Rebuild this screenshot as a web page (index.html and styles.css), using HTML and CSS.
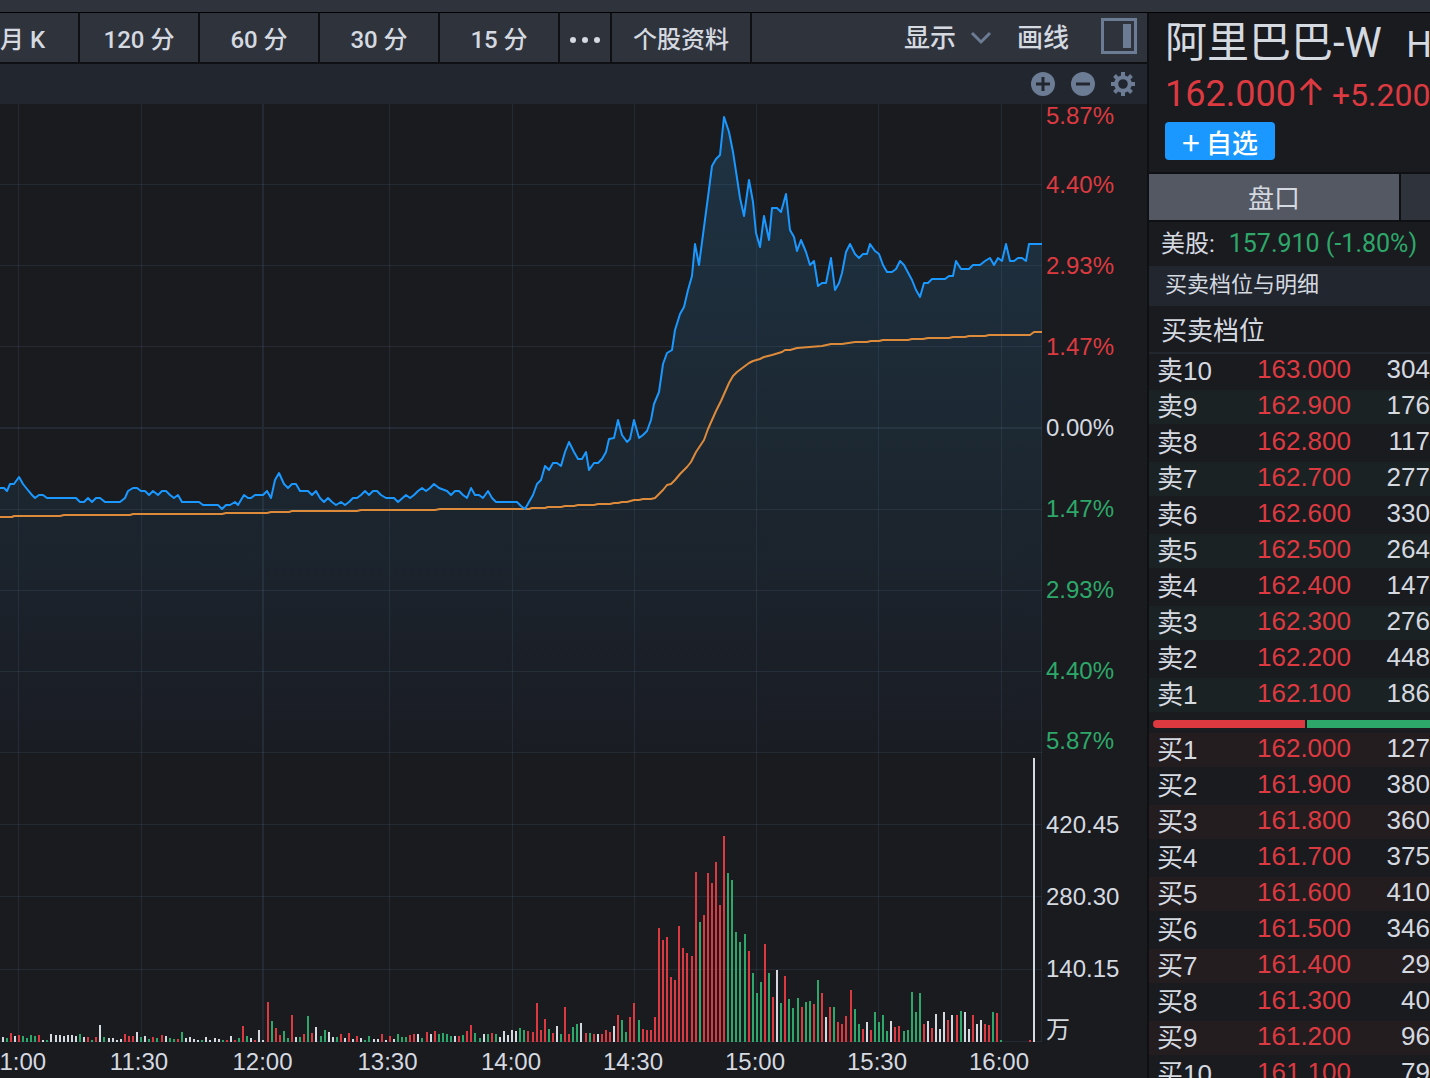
FILE: index.html
```html
<!DOCTYPE html>
<html lang="zh-CN">
<head>
<meta charset="utf-8">
<meta name="viewport" content="width=device-width, initial-scale=1">
<title>阿里巴巴-W</title>
<link rel="stylesheet" href="styles.css">
</head>
<body>
<div class="titlebar"></div>
<div class="layout">
  <main class="chart-panel">
    <div class="toolbar">
      <nav class="periods">
        <button class="period period-first" type="button">月 K</button>
        <button class="period" type="button">120 分</button>
        <button class="period" type="button">60 分</button>
        <button class="period" type="button">30 分</button>
        <button class="period" type="button">15 分</button>
        <button class="period period-more" type="button" aria-label="更多">
          <svg width="30" height="6" viewBox="0 0 30 6"><circle cx="3" cy="3" r="3"/><circle cx="15" cy="3" r="3"/><circle cx="27" cy="3" r="3"/></svg>
        </button>
        <button class="period period-info" type="button">个股资料</button>
      </nav>
      <div class="tools">
        <button class="tool" type="button">显示
          <svg class="chevron" width="22" height="14" viewBox="0 0 22 14"><path d="M2 2 11 11 20 2"/></svg>
        </button>
        <button class="tool" type="button">画线</button>
        <button class="tool tool-panel" type="button" aria-label="侧栏">
          <svg width="36" height="36" viewBox="0 0 36 36"><path class="panel-frame" d="M1.500 1.500H34.500V34.500H1.500Z"/><path class="panel-bar" d="M22 6H30V30H22Z"/></svg>
        </button>
      </div>
    </div>
    <div class="subbar">
      <button class="icon-button" type="button" aria-label="放大">
        <svg width="24" height="24" viewBox="0 0 24 24"><circle class="icon-fill" cx="12" cy="12" r="12"/><path class="icon-cut" d="M5 12H19M12 5V19"/></svg>
      </button>
      <button class="icon-button" type="button" aria-label="缩小">
        <svg width="24" height="24" viewBox="0 0 24 24"><circle class="icon-fill" cx="12" cy="12" r="12"/><path class="icon-cut" d="M5 12H19"/></svg>
      </button>
      <button class="icon-button" type="button" aria-label="设置">
        <svg width="24" height="24" viewBox="0 0 24 24"><circle class="gear-ring" cx="12" cy="12" r="6.800"/><path class="gear-teeth" d="M12 0V4M12 20V24M0 12H4M20 12H24M3.500 3.500 6.300 6.300M17.700 17.700 20.500 20.500M3.500 20.500 6.300 17.700M17.700 6.300 20.500 3.500"/></svg>
      </button>
    </div>
    <div class="chart">
      <svg class="plot" viewBox="0 104 1042 938" preserveAspectRatio="none" role="img" aria-label="分时走势与成交量">
        <defs>
          <linearGradient id="area-fill" gradientUnits="userSpaceOnUse" x1="0" y1="117" x2="0" y2="752">
            <stop offset="0" stop-color="#1e3344"/>
            <stop offset="0.5" stop-color="#1c2832"/>
            <stop offset="1" stop-color="#1a1c23"/>
          </linearGradient>
        </defs>
        <path id="area" fill="url(#area-fill)"/>
        <path class="grid" d="M0 184.500H1042M0 265.500H1042M0 346.500H1042M0 509.500H1042M0 590.500H1042M0 671.500H1042M0 752.500H1042M0 824.500H1042M0 896.500H1042M0 969.500H1042M0 1041.500H1042M18.500 104V1042M141.500 104V1042M389.500 104V1042M512.500 104V1042M634.500 104V1042M756.500 104V1042M878.500 104V1042M1001.500 104V1042M1041.500 104V1042"/>
        <path class="grid grid-major" d="M0 428H1042M263 104V1042"/>
        <path id="average" class="line line-average"/>
        <path id="price" class="line line-price"/>
        <path id="bars-r" class="bars bars-up"/>
        <path id="bars-g" class="bars bars-down"/>
        <path id="bars-w" class="bars bars-flat"/>
      </svg>
      <div class="y-axis">
        <span class="up edge-top">5.87%</span>
        <span class="up">4.40%</span>
        <span class="up">2.93%</span>
        <span class="up">1.47%</span>
        <span>0.00%</span>
        <span class="down">1.47%</span>
        <span class="down">2.93%</span>
        <span class="down">4.40%</span>
        <span class="down edge-bottom">5.87%</span>
        <span class="volume-first">420.45</span>
        <span>280.30</span>
        <span>140.15</span>
        <span class="edge-bottom">万</span>
      </div>
    </div>
    <div class="x-axis">
      <span>11:00</span><span>11:30</span><span>12:00</span><span>13:30</span><span>14:00</span><span>14:30</span><span>15:00</span><span>15:30</span><span>16:00</span>
    </div>
  </main>
  <aside class="quote">
    <header class="quote-head">
      <h1 class="name">阿里巴巴-W <span class="market">HK</span></h1>
      <div class="last">
        <span class="last-price">162.000</span>
        <svg class="arrow" width="24" height="28" viewBox="0 0 24 28"><path d="M12 27V3M2 12 12 2 22 12"/></svg>
        <span class="change">+5.200</span>
      </div>
      <button class="watch" type="button"><span class="plus">+</span>自选</button>
    </header>
    <div class="tabs">
      <button class="tab tab-active" type="button">盘口</button>
      <button class="tab" type="button" aria-label="其他"></button>
    </div>
    <p class="us-quote">美股: <span class="down">157.910 (-1.80%)</span></p>
    <p class="band">买卖档位与明细</p>
    <h2 class="depth-title">买卖档位</h2>
    <table class="depth depth-sell">
      <tbody>
        <tr><th scope="row">卖10</th><td class="price">163.000</td><td>304</td></tr>
        <tr><th scope="row">卖9</th><td class="price">162.900</td><td>176</td></tr>
        <tr><th scope="row">卖8</th><td class="price">162.800</td><td>117</td></tr>
        <tr><th scope="row">卖7</th><td class="price">162.700</td><td>277</td></tr>
        <tr><th scope="row">卖6</th><td class="price">162.600</td><td>330</td></tr>
        <tr><th scope="row">卖5</th><td class="price">162.500</td><td>264</td></tr>
        <tr><th scope="row">卖4</th><td class="price">162.400</td><td>147</td></tr>
        <tr><th scope="row">卖3</th><td class="price">162.300</td><td>276</td></tr>
        <tr><th scope="row">卖2</th><td class="price">162.200</td><td>448</td></tr>
        <tr><th scope="row">卖1</th><td class="price">162.100</td><td>186</td></tr>
      </tbody>
    </table>
    <div class="ratio"><span class="ratio-buy"></span><span class="ratio-sell"></span></div>
    <table class="depth depth-buy">
      <tbody>
        <tr><th scope="row">买1</th><td class="price">162.000</td><td>127</td></tr>
        <tr><th scope="row">买2</th><td class="price">161.900</td><td>380</td></tr>
        <tr><th scope="row">买3</th><td class="price">161.800</td><td>360</td></tr>
        <tr><th scope="row">买4</th><td class="price">161.700</td><td>375</td></tr>
        <tr><th scope="row">买5</th><td class="price">161.600</td><td>410</td></tr>
        <tr><th scope="row">买6</th><td class="price">161.500</td><td>346</td></tr>
        <tr><th scope="row">买7</th><td class="price">161.400</td><td>29</td></tr>
        <tr><th scope="row">买8</th><td class="price">161.300</td><td>40</td></tr>
        <tr><th scope="row">买9</th><td class="price">161.200</td><td>96</td></tr>
        <tr><th scope="row">买10</th><td class="price">161.100</td><td>79</td></tr>
      </tbody>
    </table>
  </aside>
</div>
<script src="chart.js"></script>
</body>
</html>
```

FILE: styles.css
```css
:root {
  --bg: #1a1b1f;
  --bar: #2f333c;
  --subbar: #22272f;
  --line: #0f1013;
  --text: #d5d9e0;
  --icon: #6d7c95;
  --red: #dc3a40;
  --green: #2ea86a;
  --blue: #1a98ff;
  --cjk: "Noto Sans CJK SC", sans-serif;
}

* { box-sizing: border-box; }

body {
  margin: 0;
  height: 100vh;
  overflow: hidden;
  display: flex;
  flex-direction: column;
  background: var(--bg);
  color: var(--text);
  font-family: Roboto, var(--cjk);
  font-size: 24px;
}

h1, h2, p { margin: 0; font-weight: 400; }

button {
  margin: 0;
  padding: 0;
  border: 0;
  background: none;
  color: inherit;
  font: inherit;
}

svg { display: block; fill: none; }

.up, .price { color: var(--red); }
.down { color: var(--green); }

.titlebar {
  flex: none;
  height: 13px;
  background: var(--bar);
  border-bottom: 1px solid #000;
}

.layout {
  flex: 1;
  min-height: 0;
  display: grid;
  grid-template-columns: minmax(0, 1fr) 283px;
}

/* Chart side */
.chart-panel { min-width: 0; overflow: hidden; }

.toolbar {
  display: flex;
  justify-content: space-between;
  height: 51px;
  background: var(--bar);
  border-bottom: 2px solid var(--line);
}

.periods { display: flex; }

.period {
  width: 120px;
  padding-bottom: 1px;
  border-right: 2px solid var(--line);
  font-weight: 500;
  white-space: nowrap;
}
.period-first { width: 80px; text-align: left; }
.period-more { width: 52px; display: grid; place-items: center; padding-top: 6px; }
.period-more svg { fill: var(--text); }
.period-info { width: 140px; }

.tools { display: flex; align-items: center; gap: 25px; padding-right: 10px; }
.tool { display: flex; align-items: center; gap: 14px; font-size: 26px; font-weight: 500; line-height: 48px; }
.tool-panel { margin: 0 0 4px 7px; }
.chevron { stroke: var(--icon); stroke-width: 3; }
.panel-frame { stroke: var(--icon); stroke-width: 3; }
.panel-bar { fill: var(--icon); }

.subbar {
  display: flex;
  justify-content: flex-end;
  align-items: center;
  gap: 16px;
  height: 40px;
  padding-right: 12px;
  background: var(--subbar);
}
.icon-fill { fill: var(--icon); }
.icon-cut { stroke: var(--subbar); stroke-width: 3; }
.gear-ring { stroke: var(--icon); stroke-width: 4; }
.gear-teeth { stroke: var(--icon); stroke-width: 4; }

.chart { display: grid; grid-template-columns: minmax(0, 1fr) 105px; }
.plot { width: 100%; height: 938px; }
.grid { stroke: #5f7f99; stroke-opacity: 0.16; }
.grid-major { stroke-width: 2; }
.line { stroke-width: 2; stroke-linejoin: round; }
.line-price { stroke: var(--blue); }
.line-average { stroke: #dd8b3b; }
.bars { stroke-width: 2; }
.bars-up { stroke: var(--red); }
.bars-down { stroke: var(--green); }
.bars-flat { stroke: var(--text); }

.y-axis {
  display: grid;
  grid-template-rows: 40px repeat(7, 81px) 42px 108px 72px 72px 37px;
  align-items: center;
  padding-left: 4px;
  font-family: "Liberation Sans", var(--cjk);
  line-height: 24px;
}
.y-axis .edge-top { align-self: start; }
.y-axis .edge-bottom { align-self: end; }
.y-axis .volume-first { align-self: end; margin-bottom: 24px; }

.x-axis {
  display: grid;
  grid-template-columns: 122fr 122fr 125fr 125fr repeat(5, 122fr);
  margin: 0 87px 0 -44px;
  font-family: "Liberation Sans", sans-serif;
  line-height: 36px;
  padding-top: 2px;
  text-align: center;
}

/* Quote side */
.quote { border-left: 2px solid var(--line); overflow: hidden; white-space: nowrap; }

.quote-head { padding: 0 0 12px 16px; border-bottom: 2px solid var(--line); }
.name { height: 57px; font-size: 42px; line-height: 60px; }
.market { margin-left: 14px; font-size: 36px; }
.last { display: flex; align-items: baseline; height: 47px; line-height: 48px; color: var(--red); }
.last-price { font-size: 36px; }
.arrow { margin: 0 9px 0 3px; stroke: currentColor; stroke-width: 3; flex: none; }
.change { font-size: 32px; }

.watch {
  display: flex;
  align-items: center;
  justify-content: center;
  gap: 6px;
  width: 110px;
  height: 38px;
  margin-top: 5px;
  border-radius: 4px;
  background: var(--blue);
  color: #fff;
  font-size: 26px;
  font-weight: 500;
}
.plus { font-family: var(--cjk); font-size: 32px; font-weight: 400; line-height: 38px; }

.tabs { display: flex; height: 48px; border-bottom: 2px solid var(--line); }
.tab { flex: 1 0 252px; padding-bottom: 2px; border-right: 2px solid var(--line); background: var(--bar); font-size: 26px; }
.tab-active { background: #535863; }

.us-quote { height: 44px; padding-left: 12px; line-height: 44px; }
.us-quote .down { margin-left: 8px; font-size: 25px; }
.band { padding: 0 0 2px 16px; background: var(--subbar); font-size: 22px; line-height: 38px; }
.depth-title {
  padding: 4px 0 0 12px;
  border-bottom: 2px solid var(--subbar);
  font-size: 26px;
  line-height: 42px;
}

.depth {
  width: 100%;
  border-collapse: separate;
  border-spacing: 0;
  table-layout: fixed;
  font-family: "Liberation Sans", var(--cjk);
  font-size: 26px;
}
.depth th, .depth td {
  height: 36px;
  padding: 0;
  border-bottom: 2px solid var(--bg);
  font-weight: 400;
  line-height: 30px;
  text-align: right;
  vertical-align: top;
}
.depth th { width: 92px; padding-left: 8px; line-height: 34px; text-align: left; }
.depth .price { width: 110px; }
.depth-sell tr:nth-child(even) { background: #1b2223; }
.depth-buy tr:nth-child(odd) { background: #241d20; }

.ratio { display: flex; gap: 2px; height: 8px; margin: 6px 0 5px 4px; }
.ratio-buy { flex: 0 0 152px; border-radius: 4px 0 0 4px; background: var(--red); }
.ratio-sell { flex: 1; background: var(--green); }
```

FILE: chart.js
```js
// Price line as x,y pairs.
const price = "0,488 4,488 7,491 10,484 14,484 19,477 23,484 27,489 32,495 35,498 39,495 43,495 47,498 76,498 80,502 84,502 88,498 92,502 96,498 100,498 105,502 120,502 125,498 128,491 133,488 137,488 141,491 145,491 149,495 153,491 158,495 162,491 166,491 170,495 174,498 178,495 182,502 199,502 203,505 218,505 222,509 226,505 230,505 235,502 238,505 244,495 248,498 251,498 255,495 263,495 267,491 271,498 275,480 279,473 284,484 288,488 292,484 296,484 300,491 308,491 312,495 316,491 320,498 324,502 328,498 332,502 336,505 341,502 345,505 349,502 353,498 357,498 361,495 365,491 369,495 373,491 377,491 381,495 386,498 394,498 398,502 406,495 410,498 414,495 418,491 422,488 426,491 430,488 434,484 439,488 447,491 451,495 455,491 459,491 463,495 467,498 471,488 475,495 479,495 483,498 488,491 492,498 496,502 517,502 521,506 525,509 533,495 537,484 541,480 545,466 549,470 553,463 557,463 561,466 565,452 569,442 574,452 578,459 582,459 586,452 589,470 594,463 598,463 602,459 606,452 609,439 614,438 618,420 622,435 627,442 630,439 634,420 639,438 643,435 647,431 651,420 654,404 659,392 663,364 667,353 672,350 675,330 680,314 684,307 688,290 692,276 695,244 699,265 704,227 708,197 712,166 716,159 720,155 724,117 729,132 733,152 737,178 740,198 744,216 749,180 753,202 756,233 760,247 764,216 769,240 772,208 777,208 781,212 786,194 790,230 794,237 797,251 801,240 806,252 810,265 814,261 818,286 822,283 826,283 831,258 835,290 839,283 842,273 846,252 850,244 855,254 859,258 863,254 867,254 870,244 875,251 879,254 883,265 887,272 892,272 896,269 900,261 904,265 912,280 916,290 920,297 924,283 928,283 932,279 945,279 949,276 953,276 956,261 961,269 969,269 973,265 980,265 985,261 990,258 994,265 998,258 1002,261 1006,244 1010,261 1014,261 1018,258 1022,258 1026,261 1029,244 1042,244";

const average = "0,517 12,517 14,516 60,516 64,515 130,515 133,514 222,514 226,513 267,513 271,512 289,512 292,511 357,511 361,510 435,510 440,509 529,509 532,508 545,508 548,507 561,507 565,506 574,506 578,505 594,505 598,504 610,504 614,503 618,503 622,502 627,502 634,500 639,500 643,499 651,499 655,498 663,490 667,485 671,484 675,480 680,474 687,467 691,462 696,452 704,440 708,429 716,411 721,401 729,383 733,376 737,372 749,363 753,361 760,359 764,357 772,355 782,352 785,350 790,350 797,348 822,346 831,344 842,344 855,342 867,342 871,341 879,341 883,340 908,340 912,339 923,339 928,338 949,338 953,337 965,337 969,336 985,336 989,335 1030,335 1034,332 1042,332";

// One entry a minute: colour (r up, g down, w flat) and bar height.
const volume = `
w5 g4 r9 w6 r7 g6 g4 g7 g6 r7 w2 g2 w8 w7 w7 w6 w7 w7 w6 g8 w5 r5 g2 r5 w17 g5
w4 w4 w2 w3 r8 r6 r6 w10 g5 w6 g3 r5 g4 r7 w6 g4 g3 r3 g10 w4 w5 w3 w2 g2 w5 w2
w4 w3 g2 r2 w6 r2 g4 r16 g6 w4 r2 w12 w2 r40 g21 r14 r7 g11 g4 r27 w5 g5 r8 g26 r9 w15
g6 g12 w10 w5 g5 r8 w4 r9 w3 r6 w4 g2 g6 w3 w3 r8 w2 r6 w3 g8 g5 g5 r7 r8 w8 g4 r10
w8 r11 g8 g9 g8 g6 w6 r6 g7 r11 r17 g9 g4 w8 g8 r9 g8 w5 w11 w7 w12 w11 g14 g12 r11 r10
r39 r12 r23 g13 r9 w16 g8 r35 r8 g15 g18 w19 r9 g9 r8 w8 r8 r12 r10 w16 r27 g22 g10 r25 r39 g22
r13 r12 r12 r25 r114 r102 r105 r65 r62 r116 r94 r89 r86 r170 g120 r127 r169 r159 r180 r137 r206 g169 g162 g110 g100 g108
r91 g69 g49 g60 r98 g69 r45 w72 g39 r66 g43 g34 g44 r35 g40 g41 r38 g62 r49 w25 r35 g35 r20 r18 r26 r52
g33 g18 r13 w20 r12 g30 g20 g27 g11 w21 r15 r16 g11 g12 g50 g30 g49 r18 w21 r14 w28 w13 w30 r22 w27 r27 g31
w30 w13 r27 w18 w22 r18 r17 g30 r29 g2 w0 w0 w0 w0 w0 w0 r2 w284`.trim().split(/\s+/);

const BASELINE = 1042;
const PRICE_FLOOR = 752;
const draw = (id, d) => document.getElementById(id).setAttribute("d", d);

draw("price", "M" + price);
draw("average", "M" + average);
draw("area", "M" + price + " V" + PRICE_FLOOR + " H0Z");

const bars = { r: "", g: "", w: "" };
volume.forEach((entry, n) => {
  const x = 3 + 4 * n + Math.floor(n / 13);
  const height = Number(entry.slice(1));
  if (height) bars[entry[0]] += `M${x} ${BASELINE}v${-height}`;
});
for (const key in bars) draw("bars-" + key, bars[key]);
```
